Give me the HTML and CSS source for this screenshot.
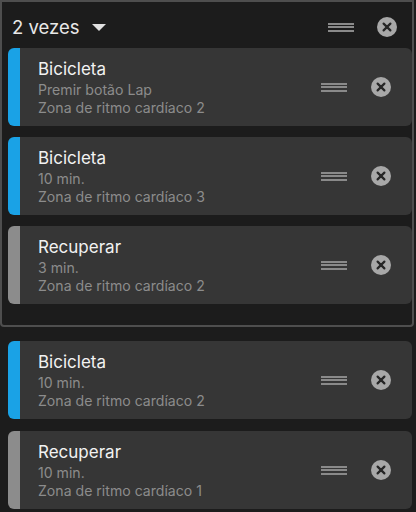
FILE: index.html
```html
<!DOCTYPE html>
<html lang="pt">
<head>
  <meta charset="UTF-8">
  <title>Treino</title>
  <link rel="stylesheet" href="styles.css">
</head>
<body>

  <div class="grupo">
    <div class="grupo-cabecalho">
      <div class="repeticoes">2 vezes <span class="seta"></span></div>
      <div class="acoes">
        <span class="alca"><i></i><i></i><i></i></span>
        <svg class="fechar" width="20" height="20" viewBox="0 0 20 20"><circle cx="10" cy="10" r="10" fill="#a8a8a8"/><path d="M6.6 6.6 L13.4 13.4 M13.4 6.6 L6.6 13.4" stroke="#262626" stroke-width="2.2" stroke-linecap="round"/></svg>
      </div>
    </div>

    <div class="lista">
      <div class="passo azul">
        <div class="textos">
          <div class="titulo">Bicicleta</div>
          <div class="detalhe">Premir botão Lap</div>
          <div class="detalhe">Zona de ritmo cardíaco 2</div>
        </div>
        <span class="alca"><i></i><i></i><i></i></span>
        <svg class="fechar" width="20" height="20" viewBox="0 0 20 20"><circle cx="10" cy="10" r="10" fill="#a8a8a8"/><path d="M6.6 6.6 L13.4 13.4 M13.4 6.6 L6.6 13.4" stroke="#262626" stroke-width="2.2" stroke-linecap="round"/></svg>
      </div>
      <div class="passo azul">
        <div class="textos">
          <div class="titulo">Bicicleta</div>
          <div class="detalhe">10 min.</div>
          <div class="detalhe">Zona de ritmo cardíaco 3</div>
        </div>
        <span class="alca"><i></i><i></i><i></i></span>
        <svg class="fechar" width="20" height="20" viewBox="0 0 20 20"><circle cx="10" cy="10" r="10" fill="#a8a8a8"/><path d="M6.6 6.6 L13.4 13.4 M13.4 6.6 L6.6 13.4" stroke="#262626" stroke-width="2.2" stroke-linecap="round"/></svg>
      </div>
      <div class="passo cinza">
        <div class="textos">
          <div class="titulo">Recuperar</div>
          <div class="detalhe">3 min.</div>
          <div class="detalhe">Zona de ritmo cardíaco 2</div>
        </div>
        <span class="alca"><i></i><i></i><i></i></span>
        <svg class="fechar" width="20" height="20" viewBox="0 0 20 20"><circle cx="10" cy="10" r="10" fill="#a8a8a8"/><path d="M6.6 6.6 L13.4 13.4 M13.4 6.6 L6.6 13.4" stroke="#262626" stroke-width="2.2" stroke-linecap="round"/></svg>
      </div>
    </div>
  </div>

  <div class="lista fora">
    <div class="passo azul">
      <div class="textos">
        <div class="titulo">Bicicleta</div>
        <div class="detalhe">10 min.</div>
        <div class="detalhe">Zona de ritmo cardíaco 2</div>
      </div>
      <span class="alca"><i></i><i></i><i></i></span>
      <svg class="fechar" width="20" height="20" viewBox="0 0 20 20"><circle cx="10" cy="10" r="10" fill="#a8a8a8"/><path d="M6.6 6.6 L13.4 13.4 M13.4 6.6 L6.6 13.4" stroke="#262626" stroke-width="2.2" stroke-linecap="round"/></svg>
    </div>
    <div class="passo cinza">
      <div class="textos">
        <div class="titulo">Recuperar</div>
        <div class="detalhe">10 min.</div>
        <div class="detalhe">Zona de ritmo cardíaco 1</div>
      </div>
      <span class="alca"><i></i><i></i><i></i></span>
      <svg class="fechar" width="20" height="20" viewBox="0 0 20 20"><circle cx="10" cy="10" r="10" fill="#a8a8a8"/><path d="M6.6 6.6 L13.4 13.4 M13.4 6.6 L6.6 13.4" stroke="#262626" stroke-width="2.2" stroke-linecap="round"/></svg>
    </div>
  </div>

</body>
</html>
```

FILE: styles.css
```css
body {
  margin: 0;
  background-color: #1c1c1c;
  font-family: Inter, "Liberation Sans", sans-serif;
  color: #fff;
  overflow: hidden;
}

.grupo {
  width: 414px;
  box-sizing: border-box;
  border: 2px solid #4e4e4e;
  border-radius: 0 0 4px 4px;
  padding: 0 0 21px 6px;
}

.grupo-cabecalho {
  height: 46px;
  box-sizing: border-box;
  padding: 4px 15px 0 4px;
  display: flex;
  align-items: center;
  justify-content: space-between;
}

.repeticoes {
  font-size: 18.5px;
  color: #e8e8e8;
  display: flex;
  align-items: center;
  gap: 12px;
}

.seta {
  width: 0;
  height: 0;
  border-left: 7px solid transparent;
  border-right: 7px solid transparent;
  border-top: 7px solid #e0e0e0;
  margin-top: 1px;
}

.acoes {
  display: flex;
  align-items: center;
  gap: 23px;
}

.lista {
  display: flex;
  flex-direction: column;
  gap: 11px;
}

.lista.fora {
  padding: 14px 4px 0 8px;
  gap: 12px;
}

.passo {
  height: 78px;
  display: flex;
  align-items: center;
  background-color: #363636;
  border-radius: 6px;
  border-left: 12px solid #8c8c8c;
  padding: 0 21px 0 18px;
}

.passo.azul { border-left-color: #1aa2e6; }
.passo.cinza { border-left-color: #8c8c8c; }

.textos {
  flex: 1;
}

.titulo {
  font-size: 17px;
  line-height: 24px;
  color: #f2f2f2;
}

.detalhe {
  font-size: 14.1px;
  line-height: 18px;
  color: #8c8c8c;
}

.alca {
  display: flex;
  flex-direction: column;
  gap: 1.5px;
  width: 26px;
  margin-right: 24px;
}

.grupo-cabecalho .alca { margin-right: 0; }

.alca i {
  display: block;
  height: 2px;
  background-color: #8a8a8a;
}

.fechar { display: block; }
```
